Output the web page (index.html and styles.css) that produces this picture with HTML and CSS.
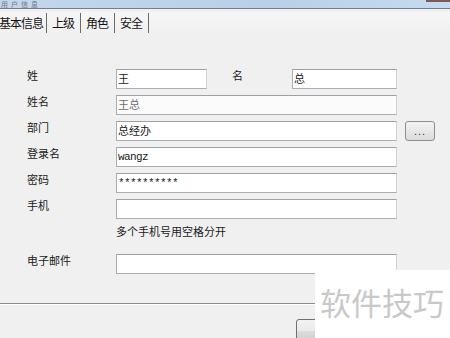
FILE: index.html
```html
<!DOCTYPE html>
<html lang="zh-CN">
<head>
<meta charset="utf-8">
<title>用户信息</title>
<link rel="stylesheet" href="styles.css">
</head>
<body>
<div class="window">
  <div class="titlebar">
    <span class="title">用户信息</span>
    <span class="close"></span>
  </div>
  <div class="tabs">
    <span class="tab tab-active">基本信息</span>
    <span class="tab">上级</span>
    <span class="tab">角色</span>
    <span class="tab">安全</span>
  </div>
  <div class="form">
    <div class="row">
      <span class="label">姓</span>
      <div class="input input-short">王</div>
      <span class="label label-inline">名</span>
      <div class="input input-name">总</div>
    </div>
    <div class="row">
      <span class="label">姓名</span>
      <div class="input input-wide input-disabled">王总</div>
    </div>
    <div class="row">
      <span class="label">部门</span>
      <div class="input input-wide">总经办</div>
      <button class="dots">...</button>
    </div>
    <div class="row">
      <span class="label">登录名</span>
      <div class="input input-wide mono">wangz</div>
    </div>
    <div class="row">
      <span class="label">密码</span>
      <div class="input input-wide mono">**********</div>
    </div>
    <div class="row">
      <span class="label">手机</span>
      <div class="input input-wide"></div>
    </div>
    <div class="hint">多个手机号用空格分开</div>
    <div class="row row-email">
      <span class="label">电子邮件</span>
      <div class="input input-wide"></div>
    </div>
  </div>
  <div class="separator"></div>
  <div class="footer">
    <button class="btn">确定</button>
  </div>
  <div class="watermark">软件技巧</div>
</div>
</body>
</html>
```
FILE: styles.css
```css
* { box-sizing: border-box; }
html, body { margin: 0; padding: 0; }
body {
  width: 450px;
  height: 338px;
  overflow: hidden;
  background: #f0f0f0;
  font-family: "Noto Sans CJK SC", "Noto Sans", sans-serif;
  font-size: 11px;
  color: #1e1e1e;
}
.window {
  position: relative;
  width: 450px;
  height: 338px;
  overflow: hidden;
}
.titlebar {
  height: 9px;
  display: flex;
  justify-content: space-between;
  align-items: flex-start;
  background: linear-gradient(to right, #c2d7ec, #b9d0e8 60%, #c6dbef);
  border-bottom: 1px solid #6f7f90;
}
.title {
  display: block;
  margin-left: 1px;
  font-size: 7px;
  line-height: 8px;
  color: #6c7784;
  letter-spacing: 3px;
}
.close {
  width: 24px;
  height: 2px;
  background: #7d5a52;
}
.tabs {
  display: flex;
  align-items: center;
  height: 22px;
  margin-top: 3px;
  background: linear-gradient(#f6f6f6, #f0f0f0);
}
.tab {
  display: block;
  padding: 0 6px 0 5px;
  line-height: 20px;
  font-size: 12px;
  letter-spacing: -1px;
  color: #141414;
  border-right: 1px solid #6a6a6a;
}
.tab-active {
  margin-left: -6px;
  padding-right: 3px;
}
.form {
  margin-top: 35px;
  padding-left: 27px;
  display: flex;
  flex-direction: column;
  gap: 6px;
}
.row {
  display: flex;
  align-items: flex-start;
}
.label {
  width: 89px;
  flex: none;
  line-height: 14px;
  margin-top: -1px;
  color: #1a1a1a;
}
.label-inline {
  width: 60px;
  margin-left: 25px;
}
.input {
  height: 20px;
  background: #ffffff;
  border: 1px solid #abadb3;
  border-top-color: #9ea0a6;
  border-right-color: #cfd2d8;
  padding: 0 1px;
  line-height: 17px;
  font-size: 11px;
  color: #1a1a1a;
  white-space: nowrap;
}
.input-short { width: 91px; }
.input-name { width: 105px; }
.input-wide { width: 281px; }
.input-disabled {
  background: #fbfbfb;
  color: #6e6e6e;
}
.mono {
  font-family: "Liberation Mono", "DejaVu Sans Mono", monospace;
  font-size: 11px;
  letter-spacing: -0.6px;
  line-height: 19px;
}
.dots {
  margin-left: 8px;
  width: 30px;
  height: 20px;
  padding: 0;
  border: 1px solid #8e8f8f;
  border-radius: 3px;
  background: linear-gradient(#f3f3f3, #e8e8e8 50%, #dadada);
  font-family: "Liberation Sans", sans-serif;
  font-size: 11px;
  line-height: 14px;
  color: #333;
  letter-spacing: 1px;
}
.hint {
  margin-left: 89px;
  margin-top: -1px;
  line-height: 14px;
  color: #1a1a1a;
}
.row-email {
  margin-top: 10px;
}
.separator {
  margin-top: 29px;
  height: 2px;
  border-top: 1px solid #8c8c8c;
  border-bottom: 1px solid #ffffff;
}
.footer {
  display: flex;
  justify-content: flex-end;
  padding-right: 79px;
  margin-top: 14px;
}
.btn {
  width: 75px;
  height: 23px;
  padding: 0;
  border: 1px solid #707070;
  border-radius: 3px;
  background: linear-gradient(#f2f2f2, #ebebeb 50%, #dddddd 51%, #cfcfcf);
  font-family: "Noto Sans CJK SC", sans-serif;
  font-size: 11px;
  color: #1a1a1a;
}
.watermark {
  position: absolute;
  left: 315px;
  top: 270px;
  width: 135px;
  height: 68px;
  background: #ffffff;
  padding-left: 5px;
  padding-top: 12px;
  font-size: 31px;
  line-height: 40px;
  color: #c9c9c9;
  white-space: nowrap;
}
```
